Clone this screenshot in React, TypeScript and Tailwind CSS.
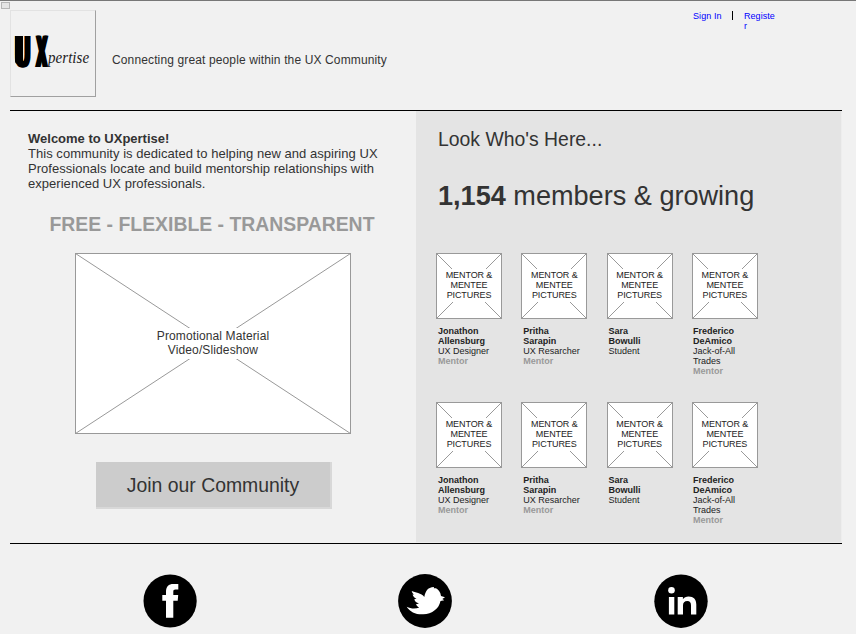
import React from "react";

type Member = { first: string; last: string; role: string; mentor: boolean };

const members: Member[] = [
  { first: "Jonathon", last: "Allensburg", role: "UX Designer", mentor: true },
  { first: "Pritha", last: "Sarapin", role: "UX Resarcher", mentor: true },
  { first: "Sara", last: "Bowulli", role: "Student", mentor: false },
  { first: "Frederico", last: "DeAmico", role: "Jack-of-All Trades", mentor: true },
];

function Cross({ w, h }: { w: number; h: number }) {
  return (
    <svg className="absolute inset-0" width={w} height={h} viewBox={`0 0 ${w} ${h}`}>
      <rect x="0.5" y="0.5" width={w - 1} height={h - 1} fill="#fff" stroke="#999" />
      <path d={`M0.5 0.5L${w - 0.5} ${h - 0.5}M${w - 0.5} 0.5L0.5 ${h - 0.5}`} stroke="#999" />
    </svg>
  );
}

function Logo() {
  return (
    <div className="relative h-[87px] w-[86px] border border-t-[#e2e2e2] border-r-[#a0a0a0] border-b-[#a0a0a0] border-l-[#e2e2e2] text-black">
      <span className="absolute top-[20px] left-[2px] origin-left scale-x-[0.5] font-['DejaVu_Sans'] text-[43px] leading-[43px] font-bold [text-shadow:2px_0_0_#000,4px_0_0_#000]">U</span>
      <span className="absolute top-[25px] left-[4px] h-[28px] w-[8px] rounded-bl-[3px] bg-black" />
      <span className="absolute top-[20px] left-[24px] origin-left -skew-x-2 scale-x-[0.33] font-['DejaVu_Sans'] text-[43px] leading-[43px] font-bold [text-shadow:2px_0_0_#000,4px_0_0_#000,6px_0_0_#000,8px_0_0_#000]">X</span>
      <span className="absolute top-[38px] left-[37px] origin-left scale-y-[1.08] font-['Liberation_Serif'] text-[15px] leading-[18px] tracking-[0.05px] whitespace-nowrap text-[#222] italic">pertise</span>
    </div>
  );
}

function MemberCard({ m }: { m: Member }) {
  return (
    <div className="group w-[66px]">
      <div className="relative flex h-[66px] items-center justify-center">
        <Cross w={66} h={66} />
        <div className="relative -mt-px w-[48px] bg-white pt-[1px] pb-[2px] text-center text-[9px] leading-[10px] tracking-[-0.1px] whitespace-nowrap text-[#222]">
          MENTOR &amp;<br />MENTEE<br />PICTURES
        </div>
      </div>
      <div className="mt-[7px] ml-[2px] w-[64px] text-[9px] leading-[10px] text-[#222] group-last:ml-[1px]">
        <div className="font-bold">{m.first}</div>
        <div className="font-bold">{m.last}</div>
        <div className="w-[58px]">{m.role}</div>
        {m.mentor && <div className="font-bold text-[#999]">Mentor</div>}
      </div>
    </div>
  );
}

function MemberRow() {
  return (
    <div className="flex h-[149px] gap-[19.3px]">
      {members.map((m) => (
        <MemberCard key={m.first} m={m} />
      ))}
    </div>
  );
}

export default function App() {
  return (
    <div className="relative flex h-[634px] w-[856px] flex-col overflow-hidden border-t border-[#777] bg-[#f1f1f1] font-['Liberation_Sans',Arial,sans-serif] text-[#333]">
      <div className="absolute top-[1px] left-[1px] h-[7px] w-[9px] border border-[#b5b5b5] bg-[#e4e4e4]" />
      <header className="flex h-[109px] pt-[9px] pl-[10px]">
        <Logo />
        <p className="mt-[42px] ml-[16px] w-[581px] text-[12px] leading-[16px] tracking-[0.13px]">Connecting great people within the UX Community</p>
        <nav className="flex text-[9px] leading-[10px] text-[#00f]">
          <a className="mt-[1px] w-[39px] tracking-[0.1px] whitespace-nowrap">Sign In</a>
          <span className="mt-[1px] h-[9px] w-px bg-black" />
          <a className="mt-[1px] ml-[11px] w-[32px] tracking-[0.05px] break-all">Register</a>
        </nav>
      </header>
      <main className="ml-[10px] flex h-[434px] w-[832px] border-y border-black">
        <section className="w-[406px] pt-[20px] pl-[18px]">
          <div className="w-[370px] text-[13px] leading-[15px] tracking-[0.035px] whitespace-nowrap">
            <b className="tracking-normal">Welcome to UXpertise!</b>
            <br />
            This community is dedicated to helping new and aspiring UX
            <br />
            Professionals locate and build mentorship relationships with
            <br />
            experienced UX professionals.
          </div>
          <h2 className="mt-[21px] ml-[21.5px] text-[19.4px] leading-[24px] font-bold whitespace-nowrap text-[#999]">FREE - FLEXIBLE - TRANSPARENT</h2>
          <div className="relative mt-[17px] ml-[47px] flex h-[181px] w-[276px] items-center justify-center">
            <Cross w={276} h={181} />
            <div className="relative -mt-[1px] w-[118px] bg-white pt-[1px] pb-[2px] text-center text-[12px] leading-[14px] tracking-[0.12px] whitespace-nowrap">
              Promotional Material<br />Video/Slideshow
            </div>
          </div>
          <button className="mt-[28px] ml-[68px] h-[47px] w-[236px] border-r-2 border-b-2 border-[#d8d8d8] bg-[#ccc] text-[19.4px] leading-[24px]">Join our Community</button>
        </section>
        <section className="w-[426px] border-r border-b border-[#ededed] bg-[#e4e4e4] pt-[16px] pl-[20px]">
          <h2 className="ml-[2px] text-[19.4px] leading-[24px]">Look Who's Here...</h2>
          <p className="mt-[28px] ml-[2px] text-[27.1px] leading-[34px]"><b>1,154</b> members &amp; growing</p>
          <div className="mt-[40px]">
            <MemberRow />
            <MemberRow />
          </div>
        </section>
      </main>
      <footer className="mt-[30px] ml-[143px] flex gap-[201px]">
        <svg width="54" height="54" viewBox="0 0 54 54">
          <circle cx="27.100" cy="27" r="26.600" />
          <path fill="#fff" d="M23 43.700V26.700H19.300V21H23V18C23 12.500 25.500 10 30.500 10H35.300V15.400H32.500C30.800 15.400 30.300 16.200 30.300 17.800V21H35.200L34.700 26.700H30.300V43.700z" />
        </svg>
        <svg width="54" height="54" viewBox="0 0 54 54" className="ml-[0.4px]">
          <circle cx="27" cy="27" r="26.900" />
          <path fill="#fff" d="M13.700 17C17 18.500 23.500 18.800 26.300 23C27 20 28 14.500 33.700 13.300L36 13L35.800 14.200L38 14.200C40.500 15.500 42.500 18 43 22L47 23.300L44.300 25L46.300 26.300L42.500 27C41.500 31 40 34 37 36C33.500 39 29.500 40.300 25.300 40.300C18 40.700 12 38 8.700 32.700C13 35 18 34.800 21.300 33.500C20 33 18.500 31.800 18 30.300L21 29.500C18.500 28.800 16.800 27.500 16.300 25.300L18.500 24.800C16.500 23.800 15 22.500 14.600 20.600L16 20.500C14.800 19.500 14 18.500 13.700 17z" />
        </svg>
        <svg width="54" height="54" viewBox="0 0 54 54" className="ml-[0.6px]">
          <circle cx="27" cy="27.200" r="26.700" />
          <g fill="#fff">
            <circle cx="17.500" cy="16.300" r="3.300" />
            <path d="M14.900 23h5.400v17.400h-5.400zM23.700 23h5.200v2.300c1.300-2 3.100-2.900 5.700-2.900 5 0 7.700 2.800 7.700 8v10H37V31.500c0-3-1-4.500-3.700-4.500-2.800 0-4.300 1.700-4.300 4.500v8.900h-5.300z" />
          </g>
        </svg>
      </footer>
    </div>
  );
}
